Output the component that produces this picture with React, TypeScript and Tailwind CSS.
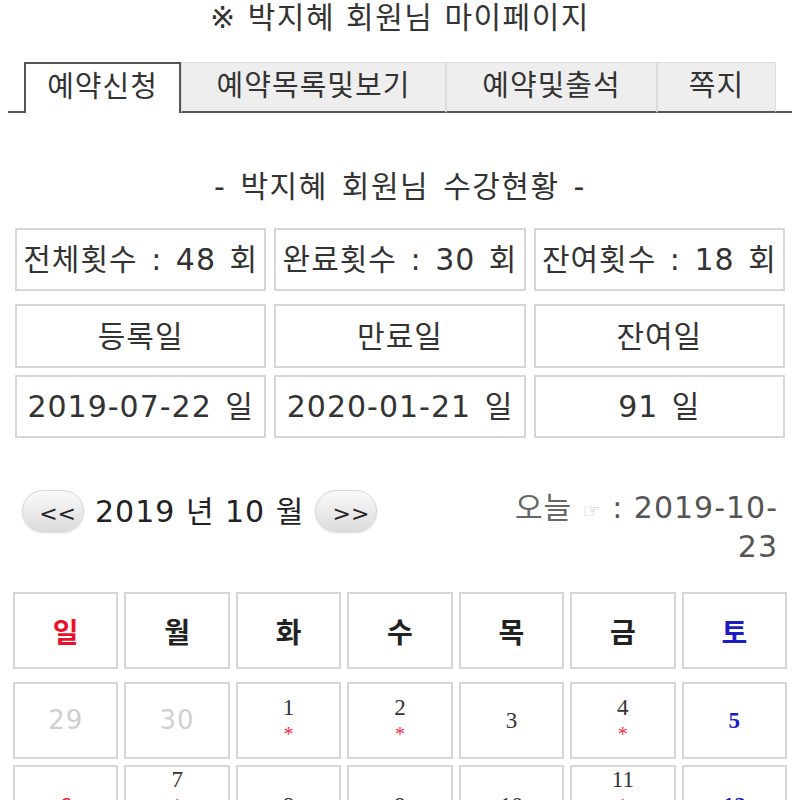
import React from "react";

const FONT = { fontFamily: '"DejaVu Sans", "Noto Sans CJK KR", sans-serif' };
const SERIF = { fontFamily: '"Liberation Serif", "Noto Serif CJK KR", "Noto Sans CJK KR", serif' };

type Day = { n: number; kind: "prev" | "sun" | "sat" | "norm"; marks: number };

const rows: Day[][] = [
  [
    { n: 29, kind: "prev", marks: 0 },
    { n: 30, kind: "prev", marks: 0 },
    { n: 1, kind: "norm", marks: 1 },
    { n: 2, kind: "norm", marks: 1 },
    { n: 3, kind: "norm", marks: 0 },
    { n: 4, kind: "norm", marks: 1 },
    { n: 5, kind: "sat", marks: 0 },
  ],
  [
    { n: 6, kind: "sun", marks: 0 },
    { n: 7, kind: "norm", marks: 2 },
    { n: 8, kind: "norm", marks: 0 },
    { n: 9, kind: "norm", marks: 0 },
    { n: 10, kind: "norm", marks: 0 },
    { n: 11, kind: "norm", marks: 2 },
    { n: 12, kind: "sat", marks: 0 },
  ],
  [
    { n: 13, kind: "sun", marks: 0 },
    { n: 14, kind: "norm", marks: 1 },
    { n: 15, kind: "norm", marks: 0 },
    { n: 16, kind: "norm", marks: 1 },
    { n: 17, kind: "norm", marks: 0 },
    { n: 18, kind: "norm", marks: 1 },
    { n: 19, kind: "sat", marks: 0 },
  ],
];

function DayCell({ d }: { d: Day }) {
  if (d.kind === "prev") {
    return (
      <div className="h-[77px] border-2 border-[#d6d6d6] flex items-center justify-center text-[26px] text-[#cfcfcf] tracking-[1px]" style={FONT}>
        {d.n}
      </div>
    );
  }
  const numCls =
    d.kind === "sun"
      ? "text-[#e8102a] font-bold"
      : d.kind === "sat"
      ? "text-[#1c1cc4] font-bold"
      : "text-[#333]";
  return (
    <div className="min-h-[77px] border-2 border-[#d6d6d6] flex flex-col items-center justify-center" style={SERIF}>
      <div className={"text-[23px] leading-[26px] " + numCls}>{d.n}</div>
      {Array.from({ length: d.marks }).map((_, i) => (
        <div key={i} className="text-[20px] leading-[26px] text-[#f0304a]">*</div>
      ))}
    </div>
  );
}

function InfoBox({ children, h }: { children: React.ReactNode; h: string }) {
  return (
    <div className={"border-2 border-[#d6d6d6] flex items-center justify-center text-[30px] tracking-[1px] [word-spacing:3px] text-[#333] whitespace-nowrap " + h}>
      {children}
    </div>
  );
}

function NavBtn({ label }: { label: string }) {
  return (
    <div className="w-[62px] h-[42px] rounded-[21px] border border-[#d8d8d8] bg-gradient-to-b from-[#fafafa] to-[#dcdcdc] shadow-[0_1px_2px_rgba(0,0,0,0.15)] flex items-end justify-end pr-[7px] pb-[6px] text-[22px] leading-[22px] text-[#222]">
      {label}
    </div>
  );
}

export default function App() {
  const heads = ["일", "월", "화", "수", "목", "금", "토"];
  return (
    <div className="w-[800px] min-h-[800px] bg-white text-[#333]" style={FONT}>
      <h1 className="text-center text-[30px] leading-[34px] tracking-[1.5px] text-[#333] pt-[1px]">※ 박지혜 회원님 마이페이지</h1>

      <div className="mt-[27px] mx-[8px] flex items-end h-[51px] text-[29px] tracking-[1px] text-[#333]">
        <div className="w-[16px] h-full border-b-2 border-[#555]" />
        <div className="w-[157px] h-full border-2 border-b-0 border-[#555] bg-white flex items-center justify-center pb-[2px]">
          예약신청
        </div>
        <div className="w-[265px] h-full bg-[#eeeeee] border border-[#dcdcdc] border-b-2 border-b-[#555] flex items-center justify-center">
          예약목록및보기
        </div>
        <div className="w-[211px] h-full bg-[#eeeeee] border border-[#dcdcdc] border-b-2 border-b-[#555] flex items-center justify-center">
          예약및출석
        </div>
        <div className="w-[119px] h-full bg-[#eeeeee] border border-[#dcdcdc] border-b-2 border-b-[#555] flex items-center justify-center">
          쪽지
        </div>
        <div className="flex-1 h-full border-b-2 border-[#555]" />
      </div>

      <div className="mt-[58px] text-center text-[30px] leading-[32px] tracking-[1.5px] [word-spacing:3px] text-[#333]">- 박지혜 회원님 수강현황 -</div>

      <div className="mt-[25px] px-[15px]">
        <div className="grid grid-cols-3 gap-x-[8px] mb-[13px]">
          <InfoBox h="h-[63px]">전체횟수 : 48 회</InfoBox>
          <InfoBox h="h-[63px]">완료횟수 : 30 회</InfoBox>
          <InfoBox h="h-[63px]">잔여횟수 : 18 회</InfoBox>
        </div>
        <div className="grid grid-cols-3 gap-x-[8px] mb-[7px]">
          <InfoBox h="h-[64px]">등록일</InfoBox>
          <InfoBox h="h-[64px]">만료일</InfoBox>
          <InfoBox h="h-[64px]">잔여일</InfoBox>
        </div>
        <div className="grid grid-cols-3 gap-x-[8px]">
          <InfoBox h="h-[63px]">2019-07-22 일</InfoBox>
          <InfoBox h="h-[63px]">2020-01-21 일</InfoBox>
          <InfoBox h="h-[63px]">91 일</InfoBox>
        </div>
      </div>

      <div className="mt-[52px] pl-[22px] pr-[22px] flex items-start justify-between">
        <div className="flex items-center h-[42px]">
          <NavBtn label="<<" />
          <div className="mx-[11px] text-[30px] tracking-[1px] text-[#222] whitespace-nowrap">2019 년 10 월</div>
          <NavBtn label=">>" />
        </div>
        <div className="w-[270px] text-right text-[30px] leading-[36px] tracking-[1px] text-[#555]">
          <span className="text-[#666]">오늘 </span>
          <span className="text-[20px] text-[#c4c4c4]">☞</span> : 2019-10-23
        </div>
      </div>

      <div className="mt-[27px] px-[13px]">
        <div className="grid grid-cols-7 gap-x-[6px] mb-[13px]">
          {heads.map((h, i) => (
            <div
              key={h}
              className={
                "h-[77px] border-2 border-[#d6d6d6] flex items-center justify-center text-[28px] font-semibold " +
                (i === 0 ? "text-[#e8102a]" : i === 6 ? "text-[#1c1cc4]" : "text-[#222]")
              }
              style={{ fontFamily: '"Noto Sans CJK KR", sans-serif' }}
            >
              {h}
            </div>
          ))}
        </div>
        {rows.map((r, ri) => (
          <div key={ri} className="grid grid-cols-7 gap-x-[6px] mb-[6px]">
            {r.map((d) => (
              <DayCell key={d.n} d={d} />
            ))}
          </div>
        ))}
      </div>
    </div>
  );
}
